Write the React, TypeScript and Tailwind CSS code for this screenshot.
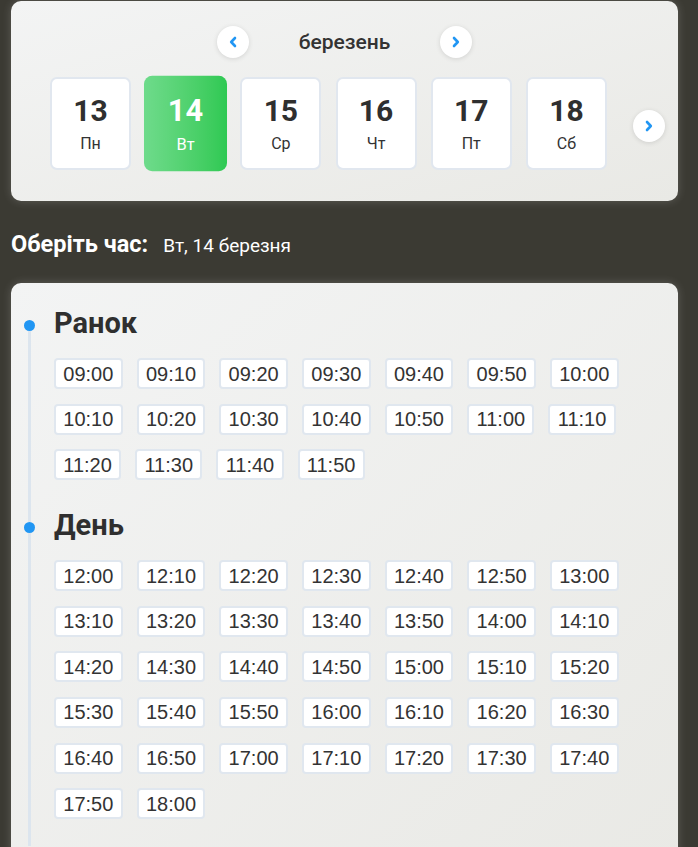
import React from "react";

const days = [
  { num: 13, name: "Пн" },
  { num: 14, name: "Вт", active: true },
  { num: 15, name: "Ср" },
  { num: 16, name: "Чт" },
  { num: 17, name: "Пт" },
  { num: 18, name: "Сб" },
];

const range = (from: string, to: string) => {
  const toMin = (t: string) => {
    const [h, m] = t.split(":").map(Number);
    return h * 60 + m;
  };
  const out: string[] = [];
  for (let m = toMin(from); m <= toMin(to); m += 10) {
    out.push(`${String(Math.floor(m / 60)).padStart(2, "0")}:${String(m % 60).padStart(2, "0")}`);
  }
  return out;
};

const sections = [
  { title: "Ранок", times: range("09:00", "11:50") },
  { title: "День", times: range("12:00", "18:00") },
];

function Chevron({ dir }: { dir: "left" | "right" }) {
  return (
    <svg width="8" height="12" viewBox="0 0 8 12" fill="none">
      <path
        d={dir === "left" ? "M6 2 L2.2 6 L6 10" : "M2 2 L5.8 6 L2 10"}
        stroke="#2196f3"
        strokeWidth="2.6"
        strokeLinecap="round"
        strokeLinejoin="round"
      />
    </svg>
  );
}

function RoundButton({ dir }: { dir: "left" | "right" }) {
  return (
    <button className="w-8 h-8 rounded-full bg-white flex items-center justify-center shadow-[0_1px_5px_rgba(0,0,0,0.12)] shrink-0">
      <Chevron dir={dir} />
    </button>
  );
}

export default function App() {
  return (
    <div className="min-h-screen bg-[#3b3a33] pl-[11px] pr-[20px] pt-px font-['Roboto',sans-serif] text-[#2f2f2f]">
      {/* Date picker */}
      <div className="rounded-[10px] bg-gradient-to-br from-[#f3f4f4] to-[#e9e9e5] shadow-[0_0_10px_rgba(255,255,255,0.18)] pt-[25px] pb-[31px]">
        <div className="flex items-center justify-center gap-[50px]">
          <RoundButton dir="left" />
          <span className="text-[21px] font-medium leading-8 text-[#333]">березень</span>
          <RoundButton dir="right" />
        </div>

        <div className="mt-[19px] flex items-center pl-[39px]">
          <div className="flex gap-[14.2px]">
            {days.map((d) =>
              d.active ? (
                <div
                  key={d.num}
                  className="w-[81px] h-[93px] scale-[1.025] rounded-[8px] bg-gradient-to-r from-[#6edb8b] to-[#2ec953] text-white flex flex-col items-center justify-center gap-[6px]"
                >
                  <span className="text-[30px] font-bold leading-[34px]">{d.num}</span>
                  <span className="text-[16px] leading-5">{d.name}</span>
                </div>
              ) : (
                <div
                  key={d.num}
                  className="w-[81px] h-[93px] rounded-[7px] bg-white border-2 border-[#e1e7ef] flex flex-col items-center justify-center gap-[6px]"
                >
                  <span className="text-[30px] font-bold leading-[34px] text-[#2f2f2f]">{d.num}</span>
                  <span className="text-[16px] leading-5 text-[#333]">{d.name}</span>
                </div>
              )
            )}
          </div>
          <div className="ml-[26px] mt-[5px]">
            <RoundButton dir="right" />
          </div>
        </div>
      </div>

      {/* Selected date */}
      <div className="mt-[27px] mb-[21px] flex items-baseline gap-[15px] text-white">
        <span className="text-[23.5px] font-bold leading-8">Оберіть час:</span>
        <span className="text-[19px] leading-8">Вт, 14 березня</span>
      </div>

      {/* Time slots */}
      <div className="rounded-[10px] bg-gradient-to-br from-[#f3f4f4] to-[#e9e9e5] shadow-[0_0_10px_rgba(255,255,255,0.18)] pl-[13px] pr-[40px] pt-[22px] pb-[40px]">
        {sections.map((s, i) => (
          <div key={s.title} className="flex gap-[19px]">
            <div className="w-[11px] flex flex-col items-center shrink-0">
              <div className={`w-[3px] h-[14.5px] ${i === 0 ? "bg-transparent" : "bg-[#dce5ee]"}`} />
              <div className="w-[11px] h-[11px] rounded-full bg-[#2196f3]" />
              <div className="w-[3px] flex-1 bg-[#dce5ee]" />
            </div>
            <div className="flex-1 pb-[27px]">
              <h2 className="text-[29px] font-bold leading-9 text-[#2f2f2f] mb-[17px]">{s.title}</h2>
              <div className="flex flex-wrap gap-x-[14px] gap-y-[14.6px]">
                {s.times.map((t) => (
                  <button
                    key={t}
                    className="h-[31px] px-[7.3px] border-2 border-[#e0e7ef] rounded-[4px] bg-white flex items-center font-['Liberation_Sans',Arial,sans-serif] text-[20px] text-[#333]"
                  >
                    {t}
                  </button>
                ))}
              </div>
            </div>
          </div>
        ))}
      </div>
    </div>
  );
}
